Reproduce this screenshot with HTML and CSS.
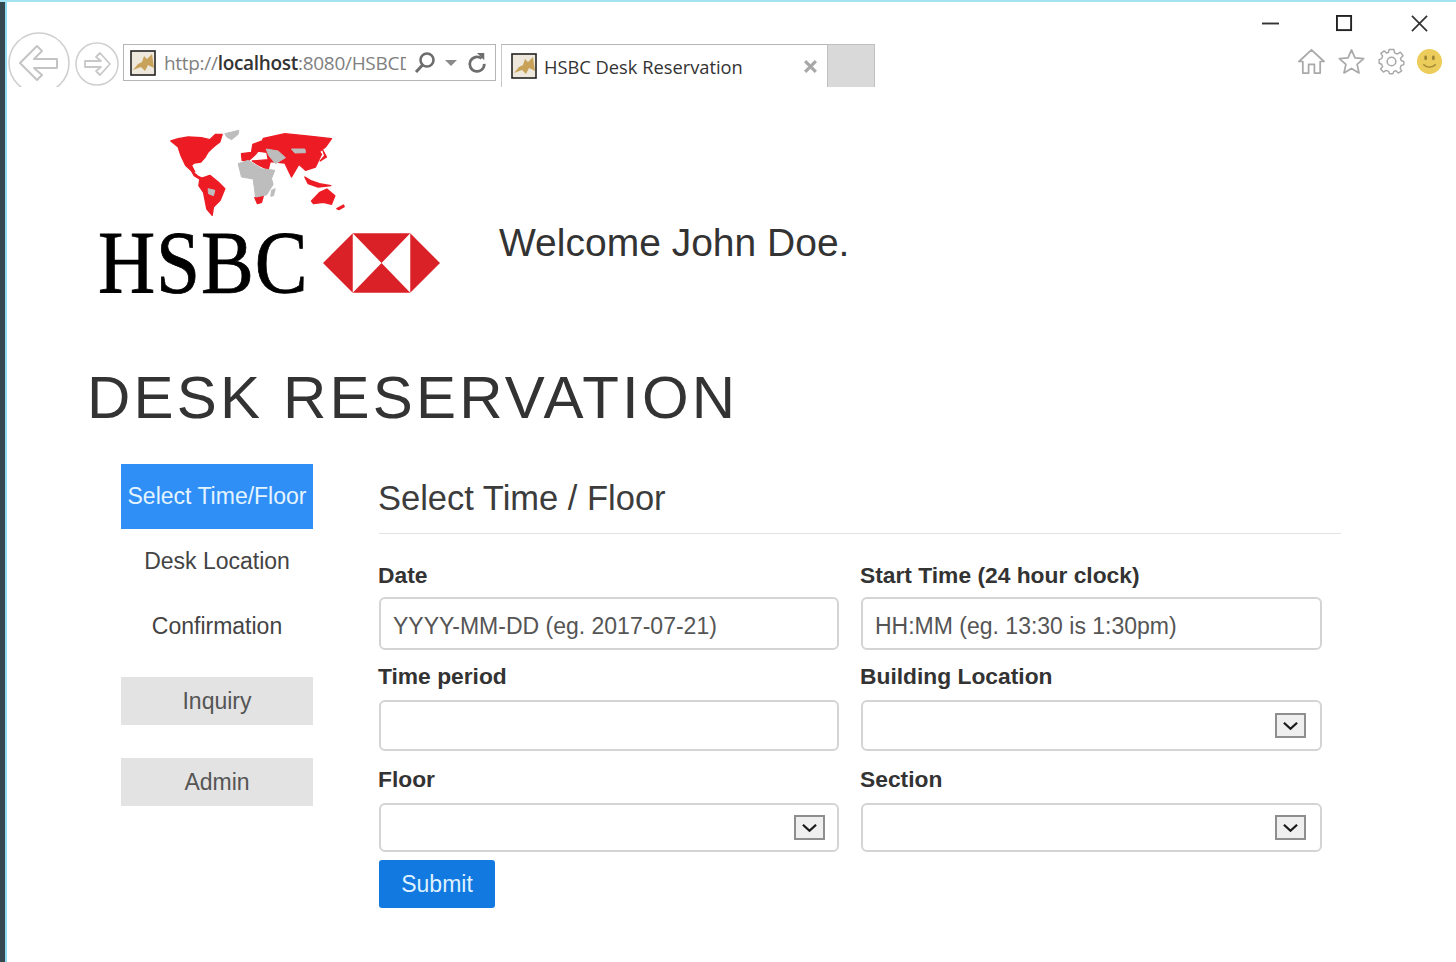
FILE: index.html
```html
<!DOCTYPE html>
<html lang="en">
  <head>
    <meta charset="UTF-8" />
    <meta name="viewport" content="width=device-width, initial-scale=1.0" />
    <title>HSBC Desk Reservation</title>
    <link rel="stylesheet" href="styles.css">
  </head>
  <body>
    <div class="window">
      <header class="chrome">
        <svg class="nav-back" viewBox="0 0 62 62">
          <circle cx="31" cy="31" r="30" fill="none" stroke="#cfcfcf" stroke-width="1.6" />
          <path d="M12 31 L29 14 L34 19 L26 27 H49 V36 H26 L34 43 L29 48 Z" fill="none" stroke="#c4c4c4" stroke-width="2" stroke-linejoin="round" />
        </svg>
        <svg class="nav-forward" viewBox="0 0 44 44">
          <circle cx="22" cy="22" r="21" fill="none" stroke="#cfcfcf" stroke-width="1.5" />
          <path d="M35 22 L25 11 L21 15 L26 19 H10 V25 H26 L21 29 L25 33 Z" fill="none" stroke="#c8c8c8" stroke-width="1.8" stroke-linejoin="round" />
        </svg>
        <div class="address-bar">
          <svg class="favicon" viewBox="0 0 26 26">
            <rect x="1" y="1" width="24" height="24" fill="#eee8dc" stroke="#222" stroke-width="1.6" />
            <path d="M3 20 L8 14 L12 12 L14 6 L17 9 L22 4 L24 18 L18 15 L15 21 L11 17 Z" fill="#c9a25a" />
          </svg>
          <span class="url">http://<b>localhost</b>:8080/HSBCDeskReservation</span>
          <svg class="search-icon" viewBox="0 0 24 24">
            <circle cx="14" cy="9" r="6.5" fill="none" stroke="#6d6d6d" stroke-width="2.6" />
            <path d="M9.5 14 L3 21" stroke="#6d6d6d" stroke-width="3" />
          </svg>
          <svg class="caret-icon" viewBox="0 0 12 8"><path d="M0 1 H12 L6 7 Z" fill="#8a8a8a" /></svg>
          <svg class="refresh-icon" viewBox="0 0 22 24">
            <path d="M16 7 A8 8 0 1 0 19 13" fill="none" stroke="#6d6d6d" stroke-width="3" />
            <path d="M11 1 L19 1 L19 9 Z" fill="#6d6d6d" />
          </svg>
        </div>
        <div class="tab">
          <svg class="favicon" viewBox="0 0 26 26">
            <rect x="1" y="1" width="24" height="24" fill="#eee8dc" stroke="#222" stroke-width="1.6" />
            <path d="M3 20 L8 14 L12 12 L14 6 L17 9 L22 4 L24 18 L18 15 L15 21 L11 17 Z" fill="#c9a25a" />
          </svg>
          <span class="tab-title">HSBC Desk Reservation</span>
          <svg class="tab-close" viewBox="0 0 14 14"><path d="M2 2 L12 12 M12 2 L2 12" stroke="#a8a8a8" stroke-width="3" /></svg>
        </div>
        <div class="new-tab"></div>
        <div class="chrome-right">
          <div class="window-controls">
            <svg viewBox="0 0 18 18" class="win-min"><path d="M0 9 H18" stroke="#333" stroke-width="2" /></svg>
            <svg viewBox="0 0 18 18" class="win-max"><rect x="1" y="1" width="15" height="15" fill="none" stroke="#222" stroke-width="2" /></svg>
            <svg viewBox="0 0 18 18" class="win-close"><path d="M1 1 L17 17 M17 1 L1 17" stroke="#333" stroke-width="1.8" /></svg>
          </div>
          <div class="tools">
            <svg viewBox="0 0 28 28">
              <path d="M14 2 L27 14 H23 V26 H17 V17 H11 V26 H5 V14 H1 Z" fill="none" stroke="#a9a9a9" stroke-width="1.8" stroke-linejoin="round" />
            </svg>
            <svg viewBox="0 0 28 28">
              <path d="M14 2 L17.6 10.2 L26.6 11 L19.8 17 L21.8 25.8 L14 21.2 L6.2 25.8 L8.2 17 L1.4 11 L10.4 10.2 Z" fill="none" stroke="#a9a9a9" stroke-width="1.8" stroke-linejoin="round" />
            </svg>
            <svg viewBox="0 0 28 28">
              <circle cx="14" cy="14" r="4.5" fill="none" stroke="#a9a9a9" stroke-width="1.6" />
              <path d="M11.5 1.5 H16.5 L17.2 5 L20.2 6.2 L23.2 4.3 L26 8 L23.4 10.6 L24 13 L26.8 14.2 V17.2 L24 18.2 L23 21 L24.6 23.8 L21 26 L18.6 23.6 L16.5 24.2 L15.5 26.8 H12 L11 24.2 L8.4 23.2 L5.6 25 L2.6 21.8 L4.8 19.4 L3.8 16.8 L1.2 15.8 V12 L3.8 11 L4.8 8.4 L3 5.6 L6.4 3 L8.8 5.2 L11 4.4 Z" fill="none" stroke="#a9a9a9" stroke-width="1.5" stroke-linejoin="round" />
            </svg>
            <svg class="smiley" viewBox="0 0 28 28">
              <circle cx="14" cy="14" r="13" fill="#eccc5a" />
              <ellipse cx="10" cy="10" rx="1.5" ry="2.6" fill="#9a8436" />
              <ellipse cx="18" cy="10" rx="1.5" ry="2.6" fill="#9a8436" />
              <path d="M7.5 17 Q14 23 20.5 17" fill="none" stroke="#a88f3a" stroke-width="1.6" />
            </svg>
          </div>
        </div>
      </header>

      <main class="page">
        <div class="brand-row">
          <div class="logo">
            <svg class="world-map" viewBox="240 20 590 270">
              <g fill="#ed1c24" stroke="#ed1c24" stroke-width="4" stroke-linejoin="round">
                <path d="M278 62 L300 55 L330 50 L370 52 L395 58 L412 42 L432 42 L425 65 L412 75 L400 85 L390 95 L380 112 L368 125 L348 128 L340 135 L350 155 L338 150 L322 135 L308 105 L300 80 L290 72 Z" />
                <path d="M340 152 L360 168 L378 176 L364 176 L348 166 Z" />
                <path d="M365 176 L395 165 L420 185 L440 205 L426 240 L406 260 L402 285 L386 266 L376 216 L362 196 Z" />
                <path d="M490 100 L520 96 L524 72 L552 62 L556 54 L620 40 L700 48 L760 55 L742 80 L724 94 L730 102 L712 140 L682 150 L662 132 L640 170 L620 128 L576 124 L570 148 L545 136 L522 122 L570 118 L566 96 L540 92 L530 104 L510 122 L492 120 Z" />
                <path d="M680 170 L700 182 L724 190 L758 196 L720 200 L690 190 Z" />
                <path d="M700 242 L725 216 L746 206 L770 226 L760 252 L736 246 L706 250 Z" />
                <path d="M530 232 L556 225 L550 246 L538 250 Z" />
                <path d="M776 265 L796 254 L798 259 L782 268 Z" />
                <path d="M734 90 L745 110 L726 122 L740 106 Z" />
              </g>
              <g fill="#bdbdbd" stroke="#bdbdbd" stroke-width="3" stroke-linejoin="round">
                <path d="M440 40 L482 30 L480 42 L460 58 L446 50 Z" />
                <path d="M390 205 L410 210 L406 226 L391 220 Z" />
                <path d="M480 130 L510 120 L550 145 L590 150 L580 175 L585 192 L565 224 L532 230 L525 176 L490 170 Z" />
                <path d="M580 210 L591 205 L586 226 L578 228 Z" />
                <path d="M564 86 L600 92 L622 112 L592 130 L572 106 Z" />
                <path d="M640 86 L680 86 L682 97 L650 98 Z" />
              </g>
            </svg>
            <div class="wordmark">
              <span class="hsbc">HSBC</span>
              <svg class="hexagon" viewBox="0 0 118 60">
                <path d="M30 0 H88 L59 30 Z M30 60 H88 L59 30 Z M30 0 V60 L0 30 Z M88 0 V60 L118 30 Z" fill="#db2128" />
              </svg>
            </div>
          </div>
          <p class="welcome">Welcome John Doe.</p>
        </div>

        <h1 class="page-title">DESK RESERVATION</h1>

        <div class="content">
          <nav class="sidebar">
            <a class="step active">Select Time/Floor</a>
            <a class="step">Desk Location</a>
            <a class="step">Confirmation</a>
            <a class="side-btn inquiry">Inquiry</a>
            <a class="side-btn admin">Admin</a>
          </nav>

          <form class="booking">
            <h2 class="form-title">Select Time / Floor</h2>
            <div class="form-grid">
              <div class="field row-one">
                <label>Date</label>
                <input type="text" placeholder="YYYY-MM-DD (eg. 2017-07-21)" />
              </div>
              <div class="field row-one">
                <label>Start Time (24 hour clock)</label>
                <input type="text" placeholder="HH:MM (eg. 13:30 is 1:30pm)" />
              </div>
              <div class="field row-two">
                <label>Time period</label>
                <input type="text" />
              </div>
              <div class="field row-two">
                <label>Building Location</label>
                <div class="select-box">
                  <span class="select-arrow"><svg viewBox="0 0 16 10"><path d="M1 1.5 L8 8 L15 1.5" fill="none" stroke="#1a1a1a" stroke-width="2.4" /></svg></span>
                </div>
              </div>
              <div class="field row-three">
                <label>Floor</label>
                <div class="select-box floor-box">
                  <span class="select-arrow"><svg viewBox="0 0 16 10"><path d="M1 1.5 L8 8 L15 1.5" fill="none" stroke="#1a1a1a" stroke-width="2.4" /></svg></span>
                </div>
              </div>
              <div class="field row-three">
                <label>Section</label>
                <div class="select-box">
                  <span class="select-arrow"><svg viewBox="0 0 16 10"><path d="M1 1.5 L8 8 L15 1.5" fill="none" stroke="#1a1a1a" stroke-width="2.4" /></svg></span>
                </div>
              </div>
            </div>
            <button type="button" class="submit-btn">Submit</button>
          </form>
        </div>
      </main>
    </div>
  </body>
</html>
```

FILE: styles.css
```css
html,
body {
  height: 100%;
}

body {
  margin: 0;
  background-color: #fff;
  color: #333;
  font-family: "Liberation Sans", Arial, sans-serif;
  border-top: 2px solid #a3e3f4;
  box-sizing: border-box;
  overflow: hidden;
}

.window {
  height: 100%;
  border-left: 5px solid #36474f;
  box-sizing: border-box;
  box-shadow: inset 2px 0 0 #8fdcf0;
}

/* browser chrome */
.chrome {
  display: flex;
  align-items: flex-start;
  height: 85px;
  overflow: hidden;
  padding-left: 3px;
}

.nav-back {
  flex: none;
  width: 62px;
  height: 62px;
  margin-top: 30px;
}

.nav-forward {
  flex: none;
  width: 44px;
  height: 44px;
  margin: 40px 0 0 5px;
}

.address-bar {
  flex: none;
  display: flex;
  align-items: center;
  width: 373px;
  height: 37px;
  margin: 42px 0 0 4px;
  padding-left: 6px;
  border: 1px solid #b5b5b5;
  box-sizing: border-box;
}

.favicon {
  flex: none;
  width: 26px;
  height: 26px;
}

.url {
  width: 242px;
  margin-left: 8px;
  overflow: hidden;
  white-space: nowrap;
  font-family: "Open Sans", sans-serif;
  font-size: 19px;
  letter-spacing: -0.3px;
  color: #808080;
}

.url b {
  font-weight: 600;
  color: #333;
}

.search-icon {
  flex: none;
  width: 24px;
  height: 24px;
  margin-left: 7px;
}

.caret-icon {
  flex: none;
  width: 12px;
  height: 8px;
  margin-left: 8px;
}

.refresh-icon {
  flex: none;
  width: 20px;
  height: 24px;
  margin-left: 10px;
}

.tab {
  flex: none;
  display: flex;
  align-items: center;
  width: 326px;
  height: 43px;
  margin: 42px 0 0 5px;
  padding-left: 9px;
  box-sizing: border-box;
  border-top: 1px solid #b5b5b5;
  border-left: 1px solid #c8c8c8;
}

.tab-title {
  margin-left: 7px;
  font-family: "Open Sans", sans-serif;
  font-size: 18.3px;
  color: #333;
  white-space: nowrap;
}

.tab-close {
  width: 15px;
  height: 15px;
  margin-left: auto;
  margin-right: 9px;
}

.new-tab {
  flex: none;
  width: 48px;
  height: 43px;
  margin-top: 42px;
  background-color: #d9d9d9;
  border: 1px solid #c0c0c0;
  border-width: 1px 1px 0;
  box-sizing: border-box;
}

.chrome-right {
  margin-left: auto;
  width: 200px;
  flex: none;
}

.window-controls {
  display: flex;
  height: 34px;
  align-items: flex-start;
  padding-top: 13px;
  box-sizing: border-box;
}

.window-controls svg {
  width: 17px;
  height: 17px;
}

.win-min {
  margin-left: 6px;
}

.win-max {
  margin-left: 57px;
}

.win-close {
  margin-left: 58px;
}

.tools {
  display: flex;
  gap: 13px;
  margin-top: 12px;
  padding-left: 42px;
}

.tools svg {
  flex: none;
  width: 27px;
  height: 27px;
}

.tools .smiley {
  margin-left: -2px;
}

/* page header */
.page {
  padding: 40px 0 0 82px;
}

.brand-row {
  display: flex;
  align-items: flex-start;
  margin-left: 11px;
}

.logo {
  flex: none;
  width: 342px;
}

.world-map {
  display: block;
  width: 197px;
  height: 90px;
  margin-left: 60px;
}

.wordmark {
  display: flex;
  align-items: center;
  height: 72px;
  margin-top: 10px;
}

.hsbc {
  width: 225px;
  font-family: "Liberation Serif", serif;
  font-size: 88px;
  line-height: 72px;
  letter-spacing: 1px;
  color: #000;
  -webkit-text-stroke: 0.8px #000;
  transform: scaleX(0.9);
  transform-origin: left center;
}

.hexagon {
  flex: none;
  width: 117px;
  height: 60px;
}

.welcome {
  margin: 94px 0 0 59px;
  font-size: 39px;
  line-height: 44px;
  color: #333;
}

.page-title {
  margin: 64px 0 0;
  font-size: 60px;
  line-height: 70px;
  font-weight: 400;
  letter-spacing: 3.2px;
  color: #333;
}

/* sidebar + form */
.content {
  display: flex;
  align-items: flex-start;
  margin: 31px 0 0 32px;
}

.sidebar {
  flex: none;
  display: flex;
  flex-direction: column;
  width: 192px;
  margin-left: 2px;
  margin-right: 66px;
}

.step,
.side-btn {
  display: flex;
  align-items: center;
  justify-content: center;
  font-size: 23px;
  color: #444;
  white-space: nowrap;
}

.step {
  height: 65px;
}

.step.active {
  background-color: #2f8ff7;
  color: #e4f4ff;
}

.side-btn {
  height: 48px;
  background-color: #e3e3e3;
  color: #555;
}

.inquiry {
  margin-top: 18px;
}

.admin {
  margin-top: 33px;
}

.booking {
  width: 962px;
}

.form-title {
  margin: 14px 0 0;
  padding-bottom: 15px;
  border-bottom: 1px solid #e3e3e3;
  font-size: 34.5px;
  line-height: 40px;
  font-weight: 400;
  color: #3c3c3c;
  text-indent: -1px;
}

.form-grid {
  display: grid;
  grid-template-columns: 460px 461px;
  column-gap: 22px;
  padding-top: 30px;
}

.field label {
  display: block;
  margin: -1px 0 0 -1px;
  font-size: 22.8px;
  line-height: 24px;
  font-weight: 700;
  color: #333;
}

.field input,
.select-box {
  display: flex;
  align-items: center;
  justify-content: flex-end;
  width: 100%;
  box-sizing: border-box;
  margin-top: 12px;
  padding: 0 14px;
  border: 2px solid #d4d4d4;
  border-radius: 6px;
  background-color: #fff;
  font-family: "Liberation Sans", Arial, sans-serif;
  font-size: 23px;
  outline: none;
}

.field input::placeholder {
  color: #555;
  opacity: 1;
}

.row-one input {
  height: 53px;
  margin-top: 10px;
  padding: 5px 12px 0;
}

.row-one {
  margin-bottom: 15px;
}

.row-two input,
.row-two .select-box {
  height: 51px;
}

.row-two {
  margin-bottom: 17px;
}

.row-three .select-box {
  height: 49px;
}

.row-three .floor-box {
  padding-right: 12px;
}

.select-arrow {
  display: flex;
  align-items: center;
  justify-content: center;
  width: 31px;
  height: 25px;
  box-sizing: border-box;
  border: 2px solid #8e8e8e;
  background-color: #efefef;
}

.select-arrow svg {
  width: 15px;
  height: 10px;
}

.submit-btn {
  display: block;
  width: 116px;
  height: 48px;
  margin-top: 8px;
  border: none;
  border-radius: 3px;
  background-color: #1279e0;
  color: #dff1ff;
  font-family: "Liberation Sans", Arial, sans-serif;
  font-size: 23px;
}
```
